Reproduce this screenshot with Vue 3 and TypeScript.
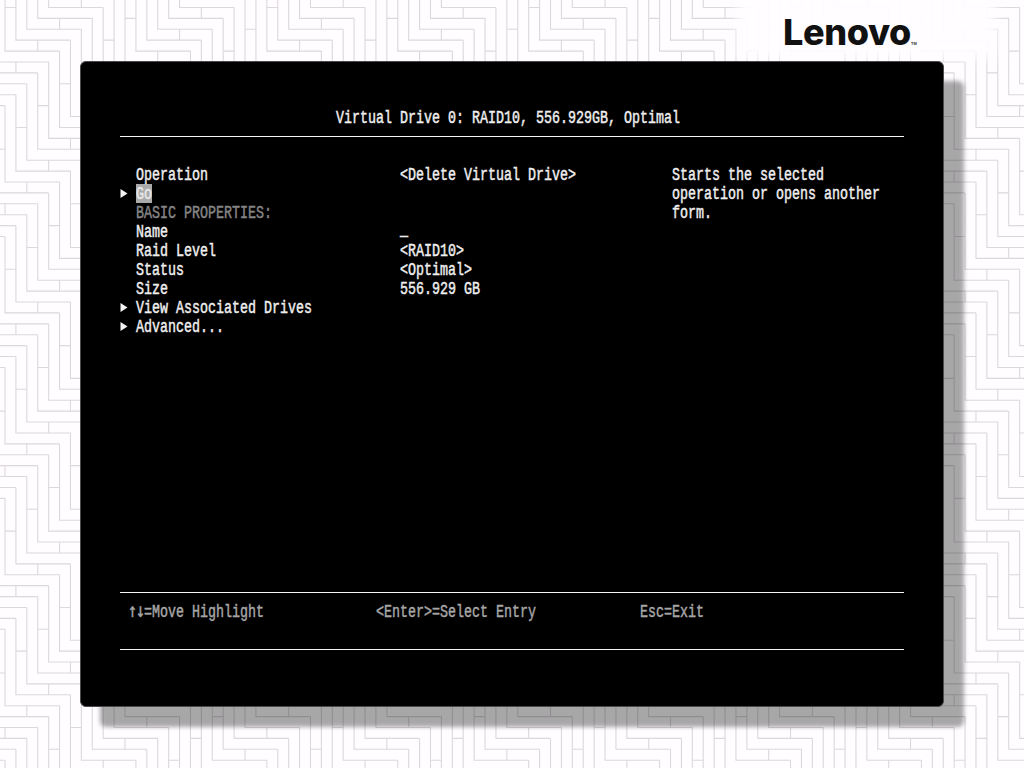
<script setup lang="ts">
interface Row { label: string; value?: string; arrow?: boolean; kind?: string }

const rows: Row[] = [
  { label: 'Operation', value: '<Delete Virtual Drive>' },
  { label: 'Go', arrow: true, kind: 'selected' },
  { label: 'BASIC PROPERTIES:', kind: 'muted' },
  { label: 'Name', value: '_', kind: 'cursor' },
  { label: 'Raid Level', value: '<RAID10>' },
  { label: 'Status', value: '<Optimal>' },
  { label: 'Size', value: '556.929 GB' },
  { label: 'View Associated Drives', arrow: true },
  { label: 'Advanced...', arrow: true },
]
const help = ['Starts the selected', 'operation or opens another', 'form.']
const keys = [
  { glyphs: '↑↓', text: '=Move Highlight' },
  { glyphs: '', text: '<Enter>=Select Entry' },
  { glyphs: '', text: 'Esc=Exit' },
]

const c = 10.91
const x0 = 5
const y0 = 182
function buildPattern(): string {
  const d: string[] = []
  for (let a = -12; a <= 14; a++) {
    for (let b = -120; b <= 120; b++) {
      const x = x0 + (5 * a + b) * c
      const y = y0 + (7 * a - b) * c
      if (x < -120 || x > 1100 || y < -60 || y > 880) continue
      d.push(`M${x.toFixed(2)} ${(y - 7 * c).toFixed(2)}V${y.toFixed(2)}H${(x + 5 * c).toFixed(2)}`)
      if (b % 2 === 0) {
        d.push(`M${x.toFixed(2)} ${(y - 3 * c).toFixed(2)}H${(x - c).toFixed(2)}`)
      } else {
        d.push(`M${(x + 3 * c).toFixed(2)} ${y.toFixed(2)}V${(y - c).toFixed(2)}`)
      }
    }
  }
  return d.join('')
}
const pattern = buildPattern()
</script>

<template>
  <div class="screen">
    <svg class="backdrop" width="1024" height="768" viewBox="0 0 1024 768" aria-hidden="true">
      <path :d="pattern" fill="none" stroke="#dcd8dc" stroke-width="1.1" />
    </svg>

    <header class="brand">
      <div class="logo-plate">
        <span class="logo">Lenovo</span><span class="tm">TM</span>
      </div>
    </header>

    <main class="panel">
      <div class="title"><span class="t">Virtual Drive 0: RAID10, 556.929GB, Optimal</span></div>

      <div class="body">
        <div class="form">
          <div v-for="row in rows" :key="row.label" class="row" :class="row.kind">
            <svg v-if="row.arrow" class="arrow" width="16" height="19" viewBox="0 0 16 19" aria-hidden="true">
              <polygon points="0.5,5 7.5,9.5 0.5,14" fill="#f4f4f4" />
            </svg>
            <span v-else class="arrow"></span>
            <div class="label"><span class="t">{{ row.label }}</span></div>
            <div v-if="row.value" class="value"><span class="t">{{ row.value }}</span></div>
          </div>
        </div>
        <div class="help">
          <div v-for="line in help" :key="line" class="line"><span class="t">{{ line }}</span></div>
        </div>
      </div>

      <footer class="keys">
        <div v-for="key in keys" :key="key.text" class="key"><span class="t"><span v-if="key.glyphs" class="glyphs">{{ key.glyphs }}</span>{{ key.text }}</span></div>
      </footer>
    </main>
  </div>
</template>

<style>
html, body { margin: 0; background: #fffdff; }
</style>

<style scoped>
.screen {
  position: relative;
  width: 1024px;
  height: 768px;
  overflow: hidden;
  background: #fffdff;
  display: flex;
  flex-direction: column;
}
.backdrop {
  position: absolute;
  left: 0;
  top: 0;
}
.brand {
  position: relative;
  height: 61px;
  flex: none;
}
.logo-plate {
  position: absolute;
  left: 745px;
  top: -10px;
  width: 205px;
  padding: 10px 0 0 38px;
  height: 50px;
  background: rgba(255, 253, 255, 0.93);
  box-shadow: 0 0 10px 8px rgba(255, 253, 255, 0.93);
  display: flex;
  align-items: flex-start;
}
.logo {
  font-family: "Inter", "Liberation Sans", sans-serif;
  font-weight: 800;
  font-size: 36px;
  line-height: 64px;
  letter-spacing: -0.4px;
  color: #111;
}
.tm {
  font-family: "Liberation Sans", sans-serif;
  font-size: 4px;
  font-weight: 700;
  line-height: 5px;
  margin-top: 41px;
  color: #333;
}
.panel {
  position: relative;
  margin-left: 80px;
  width: 864px;
  height: 646px;
  flex: none;
  box-sizing: border-box;
  border: 1px solid #4c4a4c;
  border-radius: 6px;
  padding: 46px 39px 0;
  background: #000;
  box-shadow: 20px 20px 4px rgba(0, 0, 0, 0.34);
  display: flex;
  flex-direction: column;
  font-family: "Liberation Mono", "DejaVu Sans Mono", monospace;
  font-size: 13.333px;
  font-weight: 400;
  -webkit-text-stroke: 0.35px currentColor;
  line-height: 19px;
  color: #efefef;
  white-space: pre;
}
.t {
  display: inline-block;
  transform: translateY(1px) scaleY(1.32);
  transform-origin: 50% 55%;
}
.glyphs {
  font-family: "DejaVu Sans Mono", monospace;
  font-size: 15px;
  letter-spacing: -1.03px;
  line-height: 0;
}
.title {
  height: 19px;
  padding: 0 0 9px 216px;
  border-bottom: 1px solid #f4f4f4;
}
.body {
  height: 427px;
  margin-top: 28px;
  display: flex;
}
.form {
  width: 552px;
  flex: none;
}
.row {
  height: 19px;
  display: flex;
}
.arrow {
  width: 16px;
  flex: none;
  display: block;
}
.label {
  width: 264px;
  flex: none;
}
.selected .label {
  width: 16px;
  background: #aaaaaa;
  color: #e8e8e8;
}
.muted {
  color: #858585;
}
.cursor .value .t {
  transform: translateY(-1px) scaleY(1.32);
}
.keys {
  height: 47px;
  border-top: 1px solid #f4f4f4;
  border-bottom: 1px solid #f4f4f4;
  padding-top: 9px;
  display: flex;
  color: #a6a6a6;
}
.key:nth-child(1) {
  width: 248px;
  margin-left: 8px;
}
.key:nth-child(2) {
  width: 264px;
}
</style>
